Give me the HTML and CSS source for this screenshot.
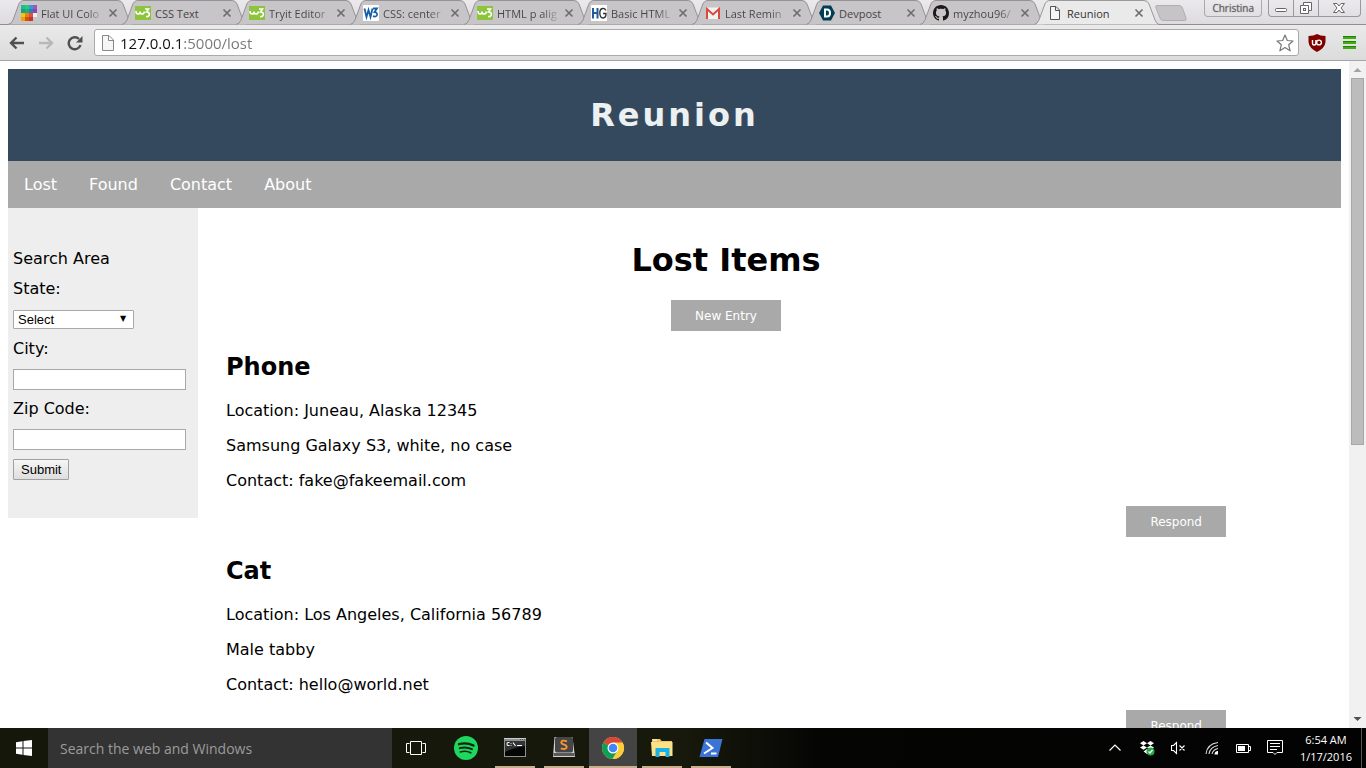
FILE: index.html
```html
<!DOCTYPE html>
<html lang="en">
<head>
<meta charset="utf-8">
<title>Reunion</title>
<link rel="stylesheet" href="styles.css">
</head>
<body>
<svg class="defs" aria-hidden="true">
  <defs>
    <symbol id="tab-shape" viewBox="0 0 125 25">
      <path d="M0 24.5 Q3.500 24 5 20 L10.500 5 Q12 .5 16 .5 H110 Q113.500 .5 115 4 L121 20 Q122.500 24 125 24.500"/>
    </symbol>
    <symbol id="x" viewBox="0 0 10 10"><path d="M1.500 1.500 L8.500 8.500 M8.500 1.500 L1.500 8.500" fill="none" stroke="#6b6b6b" stroke-width="1.600"/></symbol>
    <symbol id="w3s" viewBox="0 0 16 16"><rect y="1" width="16" height="14" fill="#8cc43c"/><path d="M1 6 Q1 9 3 9 Q5 9 5 6.500 Q5 9 7 9 Q9 9 9.500 6.500 M10 4 H13.500 L11.500 7 Q14.500 7 14.300 9.500 Q14 12 11 11.500" fill="none" stroke="#fff" stroke-width="1.600"/></symbol>
  </defs>
</svg>

<div class="window">
  <div class="tabstrip">
    <div class="tabs">
      <div class="tab"><svg class="tab-bg"><use href="#tab-shape"/></svg>
        <svg class="fav" viewBox="0 0 16 16"><path fill="#1abc9c" d="M0 0h5v4H0z"/><path fill="#2ecc71" d="M4 0h4v4H4z"/><path fill="#3498db" d="M8 0h4v4H8z"/><path fill="#9b59b6" d="M12 0h4v4h-4z"/><path fill="#16a085" d="M0 4h4v4H0z"/><path fill="#27ae60" d="M4 4h4v4H4z"/><path fill="#2980b9" d="M8 4h4v4H8z"/><path fill="#8e44ad" d="M12 4h4v4h-4z"/><path fill="#f1c40f" d="M0 8h4v4H0z"/><path fill="#e67e22" d="M4 8h4v4H4z"/><path fill="#e74c3c" d="M8 8h4v4H8z"/><path fill="#ecf0f1" d="M12 8h4v4h-4z"/><path fill="#f39c12" d="M0 12h4v4H0z"/><path fill="#d35400" d="M4 12h4v4H4z"/><path fill="#c0392b" d="M8 12h4v4H8z"/></svg>
        <span class="tab-title fade">Flat UI Colo</span><button class="close" aria-label="Close tab"><svg><use href="#x"/></svg></button></div>
      <div class="tab"><svg class="tab-bg"><use href="#tab-shape"/></svg><svg class="fav"><use href="#w3s"/></svg>
        <span class="tab-title">CSS Text</span><button class="close" aria-label="Close tab"><svg><use href="#x"/></svg></button></div>
      <div class="tab"><svg class="tab-bg"><use href="#tab-shape"/></svg><svg class="fav"><use href="#w3s"/></svg>
        <span class="tab-title fade">Tryit Editor</span><button class="close" aria-label="Close tab"><svg><use href="#x"/></svg></button></div>
      <div class="tab"><svg class="tab-bg"><use href="#tab-shape"/></svg>
        <svg class="fav" viewBox="0 0 16 16"><rect width="16" height="16" rx="1" fill="#fff"/><path d="M1.500 3.500 L3.500 12 L5.500 5 L7.500 12 L9.500 3.500 M10 3.500 H14 L11.500 7 Q14.500 7.500 14 10 Q13 12.500 10 11" fill="none" stroke="#1660a8" stroke-width="1.800"/></svg>
        <span class="tab-title fade">CSS: center</span><button class="close" aria-label="Close tab"><svg><use href="#x"/></svg></button></div>
      <div class="tab"><svg class="tab-bg"><use href="#tab-shape"/></svg><svg class="fav"><use href="#w3s"/></svg>
        <span class="tab-title fade">HTML p alig</span><button class="close" aria-label="Close tab"><svg><use href="#x"/></svg></button></div>
      <div class="tab"><svg class="tab-bg"><use href="#tab-shape"/></svg>
        <svg class="fav" viewBox="0 0 16 16"><rect width="16" height="16" fill="#fff"/><path d="M2 3V13.500 M6.500 3V13.500 M2 8H6.500" fill="none" stroke="#215b9c" stroke-width="2"/><path d="M15 5.500 Q13.500 3 11.500 3.500 Q8.800 4 8.800 8 Q9 13 12 13 Q15 13 15 8.500 H12" fill="none" stroke="#333" stroke-width="1.400"/></svg>
        <span class="tab-title fade">Basic HTML</span><button class="close" aria-label="Close tab"><svg><use href="#x"/></svg></button></div>
      <div class="tab"><svg class="tab-bg"><use href="#tab-shape"/></svg>
        <svg class="fav" viewBox="0 0 16 16"><rect x="1" y="2.500" width="14" height="11.500" rx="1" fill="#f2f2f2"/><path d="M2 14V4 L8 9.500 L14 4 V14" fill="none" stroke="#d94a3d" stroke-width="2"/></svg>
        <span class="tab-title fade">Last Remin</span><button class="close" aria-label="Close tab"><svg><use href="#x"/></svg></button></div>
      <div class="tab"><svg class="tab-bg"><use href="#tab-shape"/></svg>
        <svg class="fav" viewBox="0 0 16 16"><path d="M4 .5h8l4 7.500-4 7.500H4L0 8z" fill="#003e54"/><path d="M6 4.500h2q3 0 3 3.500t-3 3.500H6z" fill="none" stroke="#fff" stroke-width="2"/></svg>
        <span class="tab-title">Devpost</span><button class="close" aria-label="Close tab"><svg><use href="#x"/></svg></button></div>
      <div class="tab"><svg class="tab-bg"><use href="#tab-shape"/></svg>
        <svg class="fav" viewBox="0 0 16 16"><path fill="#1b1817" fill-rule="evenodd" d="M8 0C3.580 0 0 3.580 0 8c0 3.540 2.290 6.530 5.470 7.590.4.070.55-.17.55-.38 0-.19-.01-.82-.01-1.490-2.010.37-2.530-.49-2.690-.94-.09-.23-.48-.94-.82-1.130-.28-.15-.68-.52-.01-.53.63-.01 1.080.58 1.230.82.72 1.210 1.870.87 2.330.66.070-.52.28-.87.510-1.070-1.780-.2-3.640-.89-3.640-3.950 0-.87.31-1.590.82-2.150-.08-.2-.36-1.020.08-2.120 0 0 .67-.21 2.200.82.64-.18 1.320-.27 2-.27s1.360.09 2 .27c1.530-1.040 2.200-.82 2.200-.82.44 1.100.16 1.920.08 2.120.51.56.82 1.270.82 2.150 0 3.070-1.870 3.750-3.650 3.950.29.25.54.73.54 1.480 0 1.070-.01 1.930-.01 2.200 0 .21.15.46.55.38A8.010 8.010 0 0 0 16 8c0-4.420-3.580-8-8-8z"/></svg>
        <span class="tab-title fade">myzhou96/</span><button class="close" aria-label="Close tab"><svg><use href="#x"/></svg></button></div>
      <div class="tab active"><svg class="tab-bg"><use href="#tab-shape"/></svg>
        <svg class="fav" viewBox="0 0 16 16"><path d="M3.500 1.500 H9 L12.500 5 V14.500 H3.500 Z M8.500 1.500 V5.500 H12.500" fill="#f6f6f6" stroke="#555"/></svg>
        <span class="tab-title">Reunion</span><button class="close" aria-label="Close tab"><svg><use href="#x"/></svg></button></div>
    </div>
    <button class="new-tab" aria-label="New tab"><svg viewBox="0 0 34 18"><path d="M3 1.500 H25 Q27.500 1.500 28.500 4 L32 14 Q33 16.500 30 16.500 H9 Q7 16.500 6 14 L2 4 Q1 1.500 3 1.500Z" fill="#c6c4c6" stroke="#b0aeb0"/></svg></button>
    <button class="profile">Christina</button>
    <div class="controls">
      <button aria-label="Minimize"><svg viewBox="0 0 24 16"><rect x="6.500" y="8.500" width="11" height="3" rx="1" fill="#fff" stroke="#666"/></svg></button>
      <button aria-label="Restore"><svg viewBox="0 0 24 16"><path d="M9.500 2.500h8v8h-3v3h-8v-8h3z M9.500 5.500h5v5" fill="#fff" stroke="#666"/><rect x="9.500" y="8.500" width="2" height="2" fill="none" stroke="#666"/></svg></button>
      <button class="wide" aria-label="Close"><svg viewBox="0 0 24 16"><path d="M6.500 3.500h3.500l2 2.500 2-2.500h3.500L14 8l3.500 4.500H14L12 10l-2 2.500H6.500L10 8z" fill="#fff" stroke="#666"/></svg></button>
    </div>
  </div>

  <div class="toolbar">
    <button class="tool" aria-label="Back"><svg viewBox="0 0 16 16"><path d="M15 8H2 M7.500 2.500 L2 8 L7.500 13.500" fill="none" stroke="#505050" stroke-width="2.400"/></svg></button>
    <button class="tool" aria-label="Forward"><svg viewBox="0 0 16 16"><path d="M1 8H14 M8.500 2.500 L14 8 L8.500 13.500" fill="none" stroke="#b8b8b8" stroke-width="2.400"/></svg></button>
    <button class="tool" aria-label="Reload"><svg viewBox="0 0 16 16"><path d="M13.500 10 A6 6 0 1 1 12 4" fill="none" stroke="#505050" stroke-width="2.400"/><path d="M15.500 1v6.500H9z" fill="#505050"/></svg></button>
    <div class="omnibox">
      <svg class="page-icon" viewBox="0 0 16 16"><path d="M2.500 .5 H9 L13.500 5 V15.500 H2.500 Z M8.500 .5 V5.500 H13.500" fill="#f6f6f6" stroke="#888"/></svg>
      <input class="url" type="text" aria-label="Address" value="127.0.0.1:5000/lost">
      <svg class="star" viewBox="0 0 18 18"><path d="M9 1 L11.300 6.500 L17 7 L12.700 10.800 L14.100 16.800 L9 13.500 L3.900 16.800 L5.300 10.800 L1 7 L6.700 6.500 Z" fill="#fff" stroke="#777" stroke-width="1.200" stroke-linejoin="round"/></svg>
    </div>
    <button class="tool shield" aria-label="uBlock Origin"><svg viewBox="0 0 18 18"><path d="M9 0 Q12 2 17.500 2 V8 Q17 14 9 18 Q1 14 .5 8 V2 Q6 2 9 0Z" fill="#800000"/><path d="M4.500 6v3.500q0 1.500 1.700 1.500t1.700-1.500V6" fill="none" stroke="#fff" stroke-width="1.400"/><circle cx="11" cy="8.500" r="2.400" fill="none" stroke="#fff" stroke-width="1.400"/></svg></button>
    <button class="tool menu" aria-label="Menu"><svg viewBox="0 0 14 14"><path d="M0 1.500H13M0 6.500H13M0 11.500H13" stroke="#3eaf0e" stroke-width="3"/><path d="M0 .5H13M0 5.500H13M0 10.500H13" stroke="#238008"/></svg></button>
  </div>

  <div class="viewport">
    <div class="page">
      <header class="banner"><h1>Reunion</h1></header>
      <nav class="site-nav"><a href="#lost">Lost</a><a href="#found">Found</a><a href="#contact">Contact</a><a href="#about">About</a></nav>
      <div class="columns">
        <form class="search">
          <div>Search Area</div>
          <label for="state">State:</label>
          <div class="field select-wrap"><select id="state"><option>Select</option></select></div>
          <label for="city">City:</label>
          <div class="field"><input id="city" type="text"></div>
          <label for="zip">Zip Code:</label>
          <div class="field"><input id="zip" type="text"></div>
          <div class="field"><button type="button">Submit</button></div>
        </form>
        <main class="items">
          <h1>Lost Items</h1>
          <button class="action new-entry">New Entry</button>
          <article>
            <h2>Phone</h2>
            <p>Location: Juneau, Alaska 12345</p>
            <p>Samsung Galaxy S3, white, no case</p>
            <p>Contact: fake@fakeemail.com</p>
            <button class="action respond">Respond</button>
          </article>
          <article>
            <h2>Cat</h2>
            <p>Location: Los Angeles, California 56789</p>
            <p>Male tabby</p>
            <p>Contact: hello@world.net</p>
            <button class="action respond">Respond</button>
          </article>
        </main>
      </div>
    </div>
    <div class="scrollbar">
      <svg viewBox="0 0 17 17"><path d="M4.500 11 L8.500 7 L12.500 11Z" fill="#a3a3a3"/></svg>
      <div class="track"><div class="thumb"></div></div>
      <svg viewBox="0 0 17 17"><path d="M4.500 6 L8.500 10 L12.500 6Z" fill="#505050"/></svg>
    </div>
  </div>

  <footer class="taskbar">
    <button class="start" aria-label="Start"><svg viewBox="0 0 16 16"><path d="M0 2.200L6.500 1.300V7.500H0z M7.500 1.100L16 0V7.500H7.500z M0 8.500H6.500V14.700L0 13.800z M7.500 8.500H16V16L7.500 14.900z" fill="#fff"/></svg></button>
    <input class="task-search" type="text" placeholder="Search the web and Windows" aria-label="Search the web and Windows">
    <div class="apps">
      <button class="app" aria-label="Task View"><svg viewBox="0 0 24 24"><path d="M5.500 5.500h11v13h-11z M4.500 7.500h-3v9h3 M17.500 7.500h3v9h-3" fill="none" stroke="#fff"/></svg></button>
      <button class="app" aria-label="Spotify"><svg viewBox="0 0 24 24"><circle cx="12" cy="12" r="12" fill="#1ed760"/><path d="M5 8.200Q12.500 6 19.500 9.600" fill="none" stroke="#12240f" stroke-width="2.300" stroke-linecap="round"/><path d="M5.700 12.200Q12 10.300 18 13.200" fill="none" stroke="#12240f" stroke-width="1.900" stroke-linecap="round"/><path d="M6.200 15.900Q12 14.300 16.800 16.800" fill="none" stroke="#12240f" stroke-width="1.600" stroke-linecap="round"/></svg></button>
      <button class="app open" aria-label="Command Prompt"><svg viewBox="0 0 24 24"><rect x="1" y="2" width="22" height="19" fill="#8d9295"/><path d="M1 2.500H23" stroke="#c8ced2"/><rect x="2" y="5" width="20" height="15" fill="#050505"/><path d="M2 5H22V10Q12 11 2 16Z" fill="#333"/><path d="M6.500 6.500H5Q4 6.500 4 8T5 9.500H6.500 M8 7V7.800 M8 9V9.800 M10 6.500L12.500 10 M14 9.500H19" fill="none" stroke="#fff" stroke-width="1.100"/><path d="M17 3.500H22" stroke="#555" stroke-dasharray="1 1"/></svg></button>
      <button class="app open" aria-label="Sublime Text"><svg viewBox="0 0 24 24"><path d="M2.500 1H20.500L23 21H1Z" fill="#d1d1d1"/><rect x="3" y="1" width="18" height="15.500" rx="2" fill="#464646"/><path d="M1.500 17H22.500V20H1.500Z" fill="#5a5a5a"/><path d="M15 5.300Q9.500 3.500 9.300 6.300Q9.300 8 12 8.700Q15 9.500 14.700 11.300Q14 14 8.800 12.300" fill="none" stroke="#f79432" stroke-width="1.900"/></svg></button>
      <button class="app open current" aria-label="Chrome"><svg viewBox="0 0 24 24"><circle cx="12" cy="12" r="11" fill="#f9cb3c"/><path d="M12 12L2.470 6.500A11 11 0 0 1 21.530 6.500Z" fill="#db4437"/><path d="M12 12L2.470 6.500A11 11 0 0 0 11.500 23L16.800 14.500Z" fill="#109d58"/><path d="M12 6.500H21.530A11 11 0 0 1 11.500 23L16.800 14.500Z" fill="#fbcc3c"/><circle cx="12" cy="12" r="5.500" fill="#fff"/><circle cx="12" cy="12" r="4.300" fill="#4285f4"/></svg></button>
      <button class="app open" aria-label="File Explorer"><svg viewBox="0 0 24 24"><path d="M2 3H10L11.500 5H22V20H2Z" fill="#efc75e"/><path d="M1 6H22.500V20H2Z" fill="#fce189"/><path d="M3 4H7" stroke="#fff"/><path d="M5.500 21V12H19.500V21H15.500V16H9.500V21Z" fill="#18b2e8"/></svg></button>
      <button class="app open" aria-label="PowerShell"><svg viewBox="0 0 24 24"><path d="M5.500 3H23.500L19 21H.5Z" fill="#3c74d6"/><path d="M7 6.500L13.500 12L5 17.500" fill="none" stroke="#fff" stroke-width="2"/><path d="M12 17.500H17.500" stroke="#fff" stroke-width="2"/></svg></button>
    </div>
    <div class="tray">
      <svg viewBox="0 0 16 16"><path d="M2.500 10.500L8 5L13.500 10.500" fill="none" stroke="#fff" stroke-width="1.200"/></svg>
      <svg viewBox="0 0 16 16"><path d="M4.500 1L8 3.200L4.500 5.400L1 3.200Z M11.500 1L15 3.200L11.500 5.400L8 3.200Z M4.500 5.400L8 7.600L4.500 9.800L1 7.600Z M11.500 5.400L15 7.600L11.500 9.800L8 7.600Z M8 9L11.500 11.500L8 14L4.500 11.500Z" fill="#fff"/><circle cx="11.500" cy="11.500" r="4" fill="#28a745"/><path d="M9.500 11.500L11 13L13.500 10" fill="none" stroke="#fff" stroke-width="1.200"/></svg>
      <svg viewBox="0 0 16 16"><path d="M.5 5.500H2.500L5.500 2.500V13.500L2.500 10.500H.5Z M8.500 5.500L13.500 10.500M13.500 5.500L8.500 10.500" fill="none" stroke="#fff" stroke-width="1.100"/></svg>
      <svg viewBox="0 0 16 16"><path d="M3 14Q4 4 15 2.500 M6 14Q7 7 15 5.500 M9 14Q10 9.500 15 8.500" fill="none" stroke="#ddd" stroke-width="1.100"/><path d="M11.500 14.500Q11.500 11 15 11V14.500Z" fill="#fff"/></svg>
      <svg viewBox="0 0 16 16"><path d="M1.500 4.500H13.500V12.500H1.500Z M13.500 6.500H15.500V10.500H13.500" fill="none" stroke="#fff"/><path d="M3 6H10V11H3Z" fill="#fff"/></svg>
      <svg viewBox="0 0 16 16"><path d="M.5 .5H15.500V12.500H10L8 14.500L6 12.500H.5Z M3 3.500H13M3 6.500H13M3 9.500H10" fill="none" stroke="#fff"/></svg>
    </div>
    <div class="clock"><span>6:54 AM</span><span>1/17/2016</span></div>
    <div class="peek"></div>
  </footer>
</div>
</body>
</html>
```
FILE: styles.css
```css
* { box-sizing: border-box; }
body { margin: 0; font-family: "DejaVu Sans", Verdana, sans-serif; font-size: 16px; color: #000; background: #fff; }
button { padding: 0; border: 0; background: none; font: inherit; color: inherit; }
svg { display: block; flex: none; }
.defs { position: absolute; width: 0; height: 0; }
.window { display: flex; flex-direction: column; height: 100vh; overflow: hidden; }

/* Tab strip */
.tabstrip { display: flex; align-items: flex-start; height: 25px; flex: none; padding-left: 8px; background: linear-gradient(#ebe9ec, #dddbdf); border-bottom: 1px solid #8f8f8f; font-family: "Open Sans", sans-serif; font-size: 12px; color: #444; }
.tabs { display: flex; margin-bottom: -1px; }
.tab { position: relative; display: flex; align-items: center; width: 114px; height: 25px; padding: 1px 0 0 13px; font-size: 11px; }
.tab-bg { position: absolute; top: 0; left: 0; width: 125px; height: 25px; fill: #c8c5c8; stroke: #949294; }
.tab.active { z-index: 2; color: #333; }
.tab.active .tab-bg { fill: #ebeaeb; stroke: #999; }
.fav { position: relative; width: 16px; height: 16px; margin-right: 4px; }
.tab-title { position: relative; width: 63px; white-space: nowrap; }
.fade { color: transparent; background: linear-gradient(90deg, #444 46px, #bbb 62px); -webkit-background-clip: text; background-clip: text; }
.close { position: relative; width: 10px; margin-left: 4px; }
.close svg { width: 10px; height: 10px; }
.new-tab { margin: 4px 0 0 6px; }
.new-tab svg { width: 34px; height: 18px; }
.profile { height: 17px; margin-left: auto; padding: 0 7px; border: 1px solid #aaa; border-top: 0; border-radius: 0 0 4px 4px; font-size: 10px; line-height: 16px; color: #666; text-shadow: 0 0 1px #777; }
.controls { display: flex; margin: 0 5px 0 6px; border: 1px solid #999; border-top: 0; border-radius: 0 0 4px 4px; }
.controls button { width: 25px; height: 16px; border-right: 1px solid #999; }
.controls .wide { width: 41px; padding-left: 8px; border-right: 0; }
.controls svg { width: 24px; height: 16px; }

/* Toolbar */
.toolbar { display: flex; align-items: center; gap: 13px; height: 36px; flex: none; padding: 0 9px; background: linear-gradient(#ebeaeb, #dcdbdc); border-bottom: 1px solid #a5a5a5; }
.tool svg { width: 16px; height: 16px; }
.omnibox { display: flex; align-items: center; flex: 1; height: 27px; margin-left: -2px; padding: 0 4px 0 5px; background: #fff; border: 1px solid #aaa; border-radius: 3px; }
.page-icon { width: 16px; height: 16px; }
.url { flex: 1; min-width: 0; height: 25px; margin-left: 4px; padding: 0; border: 0; font-family: "Open Sans", sans-serif; font-size: 15px; color: transparent; background: linear-gradient(90deg, #111 62px, #777 62px); -webkit-background-clip: text; background-clip: text; }
.star { width: 18px; height: 18px; }
.shield { margin-left: -4px; }
.shield svg { width: 18px; height: 18px; }
.menu { margin-left: 4px; }
.menu svg { width: 14px; height: 14px; }

/* Page */
.viewport { display: flex; flex: 1; min-height: 0; overflow: hidden; }
.page { flex: 1; min-width: 0; padding: 8px; }
.banner { padding: 27px 0 26px; background: #34495e; color: #ecf0f1; text-align: center; }
.banner h1 { margin: 0; font-size: 32px; line-height: 39px; letter-spacing: 3px; }
.site-nav { display: flex; gap: 32px; padding: 1px 16px 0; background: #a9a9a9; line-height: 46px; }
.site-nav a { color: #fff; text-decoration: none; }
.columns { display: flex; align-items: flex-start; }
.search { width: 190px; flex: none; padding: 36px 5px 34px; background: #eee; line-height: 30px; }
.search label { display: block; }
.field { display: flex; align-items: center; height: 30px; }
.field input { width: 173px; height: 21px; padding: 1px; border: 1px solid #a9a9a9; background: #fff; }
.select-wrap { position: relative; }
.select-wrap::after { content: "▼"; position: absolute; left: 107px; top: 9px; font-size: 8px; line-height: 12px; pointer-events: none; }
.field select { appearance: none; width: 121px; height: 19px; padding: 0 4px; border: 1px solid #a9a9a9; border-radius: 1px; background: #fff; color: #000; font-family: "Liberation Sans", Arial, sans-serif; font-size: 13px; }
.field button { height: 21px; padding: 0 7px; border: 1px solid #a0a0a0; border-radius: 1px; background: linear-gradient(#f6f6f6, #dedede); font-family: "Liberation Sans", Arial, sans-serif; font-size: 13px; line-height: 19px; }
.items { flex: 1; padding: 33px 115px 0 28px; }
.items h1 { margin: 0 0 20px; font-size: 32px; line-height: 39px; text-align: center; }
.items h2 { margin: 22px 0 19px; font-size: 24px; line-height: 29px; }
.items p { margin: 0 0 16px; line-height: 19px; }
.action { display: block; padding: 9px 24px 7px; background: #a9a9a9; color: #fff; font-size: 12px; line-height: 15px; }
.new-entry { margin: 0 auto; }
.respond { margin-left: auto; }
.items article + article h2 { margin-top: 20px; }

.scrollbar { display: flex; flex-direction: column; width: 17px; background: #f1f1f1; }
.scrollbar svg { width: 17px; height: 17px; }
.track { flex: 1; padding: 0 2px; }
.thumb { height: 58%; background: #bcbcbc; border: 1px solid #a8a8a8; }

/* Taskbar */
.taskbar { display: flex; align-items: stretch; height: 40px; flex: none; background: linear-gradient(90deg, #14170a, #17190c 50%, #050604 60%, #020202); color: #fff; font-family: "Open Sans", sans-serif; }
.start { display: flex; align-items: center; justify-content: center; width: 48px; }
.start svg { width: 16px; height: 16px; }
.task-search { width: 344px; padding: 0 12px; border: 0; background: #333; color: #fff; font-family: inherit; font-size: 14px; }
.task-search::placeholder { color: #9b9b9b; }
.apps { display: flex; gap: 1px; padding-left: 1px; }
.app { display: flex; align-items: center; justify-content: center; position: relative; width: 48px; }
.app svg { width: 24px; height: 24px; }
.open::after { content: ""; position: absolute; left: 4px; right: 4px; bottom: 0; height: 2px; background: #c8ae8c; }
.current { background: #444; }
.current::after { left: 0; right: 0; }
.tray { display: flex; align-items: center; gap: 16px; margin-left: auto; }
.tray svg { width: 16px; height: 16px; }
.clock { display: flex; flex-direction: column; justify-content: center; margin-left: 17px; padding-bottom: 1px; font-size: 11px; line-height: 17px; text-align: center; }
.peek { width: 5px; margin-left: 9px; border-left: 1px solid #555; }
```
